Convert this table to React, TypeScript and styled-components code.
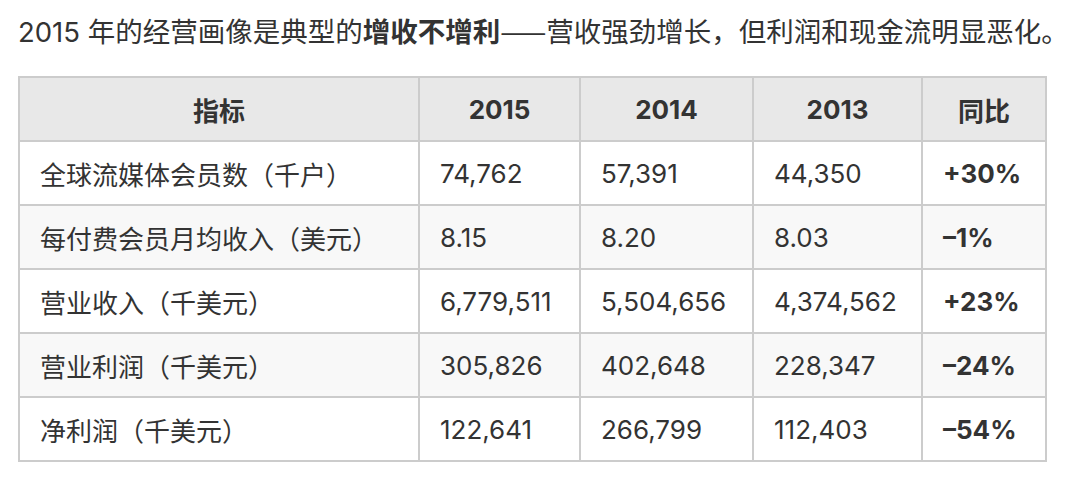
import React from "react";
import styled, { createGlobalStyle } from "styled-components";

const Global = createGlobalStyle`
  html, body { margin: 0; padding: 0; background: #ffffff; }
  body {
    font-family: "Inter", "Noto Sans CJK SC", sans-serif;
    color: #333333;
  }
`;

const Page = styled.div`
  padding: 12px 18px 0 18px;
  display: flex;
  flex-direction: column;
  gap: 25px;
`;

const Intro = styled.p`
  margin: 0;
  font-size: 27.5px;
  line-height: 37px;
  color: #333333;
  white-space: nowrap;
`;

const Strong = styled.strong`
  font-weight: 700;
`;

const Dash = styled.span`
  font-family: "Noto Sans CJK SC", sans-serif;
`;

const Table = styled.table`
  border-collapse: collapse;
  table-layout: fixed;
  width: 1027px;
  font-size: 26px;
  color: #333333;
`;

const Row = styled.tr`
  height: 64px;
  background: #ffffff;
  &:nth-child(even) { background: #f8f8f8; }
`;

const HeadRow = styled.tr`
  height: 64px;
  background: #e8e8e8;
`;

const HeadCell = styled.th`
  border: 2px solid #cccccc;
  font-weight: 700;
  text-align: center;
  padding: 0 20px;
`;

const Cell = styled.td<{ $bold?: boolean }>`
  border: 2px solid #cccccc;
  padding: 0 20px;
  text-align: left;
  font-weight: ${(p) => (p.$bold ? 700 : 400)};
  white-space: nowrap;
`;

const widths = [400, 161, 173, 169, 124];
const headers = ["指标", "2015", "2014", "2013", "同比"];
const rows = [
  ["全球流媒体会员数（千户）", "74,762", "57,391", "44,350", "+30%"],
  ["每付费会员月均收入（美元）", "8.15", "8.20", "8.03", "–1%"],
  ["营业收入（千美元）", "6,779,511", "5,504,656", "4,374,562", "+23%"],
  ["营业利润（千美元）", "305,826", "402,648", "228,347", "–24%"],
  ["净利润（千美元）", "122,641", "266,799", "112,403", "–54%"],
];

export default function App() {
  return (
    <>
      <Global />
      <Page>
        <Intro>
          2015 年的经营画像是典型的<Strong>增收不增利</Strong>
          <Dash>——</Dash>营收强劲增长，但利润和现金流明显恶化。
        </Intro>
        <Table>
          <colgroup>
            {widths.map((w, i) => (
              <col key={i} style={{ width: w }} />
            ))}
          </colgroup>
          <thead>
            <HeadRow>
              {headers.map((h) => (
                <HeadCell key={h}>{h}</HeadCell>
              ))}
            </HeadRow>
          </thead>
          <tbody>
            {rows.map((r) => (
              <Row key={r[0]}>
                {r.map((c, i) => (
                  <Cell key={i} $bold={i === 4}>
                    {c}
                  </Cell>
                ))}
              </Row>
            ))}
          </tbody>
        </Table>
      </Page>
    </>
  );
}
